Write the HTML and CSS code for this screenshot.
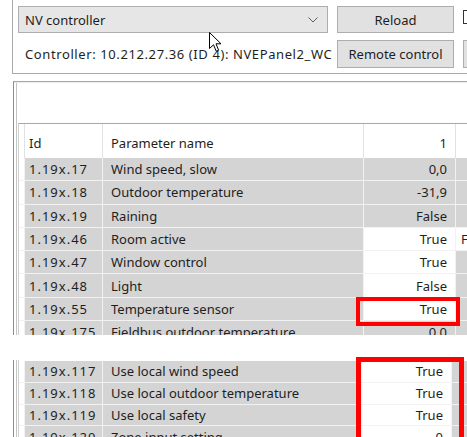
FILE: index.html
```html
<!DOCTYPE html>
<html>
<head>
<meta charset="utf-8">
<title>NV controller</title>
<link rel="stylesheet" href="styles.css">
</head>
<body>
<div class="screen">
  <div class="toolbar">
    <div class="tb-row tb-row-1">
      <div class="combo">
        <span class="combo-text">NV controller</span>
        <svg class="chev" width="10" height="6" viewBox="0 0 10 6"><path d="M0.5 0.5 L5 5 L9.5 0.5" fill="none" stroke="#606060" stroke-width="1"/></svg>
      </div>
      <button class="btn btn-reload">Reload</button>
      <span class="check"></span>
    </div>
    <div class="tb-row tb-row-2">
      <div class="status">Controller: 10.212.27.36 (ID 4): NVEPanel2_WC</div>
      <button class="btn btn-remote">Remote control</button>
      <button class="btn btn-next"></button>
    </div>
  </div>

  <div class="panel panel-top">
    <div class="panel-space"></div>
    <div class="grid grid-top">
      <div class="row head">
        <div class="c gut"></div>
        <div class="c id">Id</div>
        <div class="c name">Parameter name</div>
        <div class="c val">1</div>
        <div class="c ext"></div>
      </div>
      <div class="row">
        <div class="c gut"></div><div class="c id">1.19x.17</div><div class="c name">Wind speed, slow</div><div class="c val">0,0</div><div class="c ext"></div>
      </div>
      <div class="row">
        <div class="c gut"></div><div class="c id">1.19x.18</div><div class="c name">Outdoor temperature</div><div class="c val">-31,9</div><div class="c ext"></div>
      </div>
      <div class="row">
        <div class="c gut"></div><div class="c id">1.19x.19</div><div class="c name">Raining</div><div class="c val">False</div><div class="c ext"></div>
      </div>
      <div class="row">
        <div class="c gut"></div><div class="c id">1.19x.46</div><div class="c name">Room active</div><div class="c val edit">True</div><div class="c ext edit">False</div>
      </div>
      <div class="row">
        <div class="c gut"></div><div class="c id">1.19x.47</div><div class="c name">Window control</div><div class="c val edit">True</div><div class="c ext"></div>
      </div>
      <div class="row">
        <div class="c gut"></div><div class="c id">1.19x.48</div><div class="c name">Light</div><div class="c val edit">False</div><div class="c ext"></div>
      </div>
      <div class="row">
        <div class="c gut"></div><div class="c id">1.19x.55</div><div class="c name">Temperature sensor</div><div class="c val edit">True</div><div class="c ext"></div>
      </div>
      <div class="row">
        <div class="c gut"></div><div class="c id">1.19x.175</div><div class="c name">Fieldbus outdoor temperature</div><div class="c val">0,0</div><div class="c ext"></div>
      </div>
    </div>
  </div>

  <div class="panel panel-bottom">
    <div class="grid grid-bottom">
      <div class="row">
        <div class="c gut"></div><div class="c id">1.19x.117</div><div class="c name">Use local wind speed</div><div class="c val edit">True</div><div class="c ext"></div>
      </div>
      <div class="row">
        <div class="c gut"></div><div class="c id">1.19x.118</div><div class="c name">Use local outdoor temperature</div><div class="c val edit">True</div><div class="c ext"></div>
      </div>
      <div class="row">
        <div class="c gut"></div><div class="c id">1.19x.119</div><div class="c name">Use local safety</div><div class="c val edit">True</div><div class="c ext"></div>
      </div>
      <div class="row">
        <div class="c gut"></div><div class="c id">1.19x.120</div><div class="c name">Zone input setting</div><div class="c val edit">0</div><div class="c ext"></div>
      </div>
    </div>
  </div>

  <svg class="cursor" width="13" height="21" viewBox="0 0 13 21">
    <path d="M0.5 0.5 L0.5 16.5 L4.5 12.8 L7.2 19.2 L9.6 18.2 L7 11.8 L12 11.8 Z" fill="#fff" stroke="#000" stroke-width="1" stroke-linejoin="miter"/>
  </svg>
  <div class="mark mark-1"></div>
  <div class="mark mark-2"></div>
</div>
</body>
</html>
```

FILE: styles.css
```css
html, body {
  margin: 0;
  padding: 0;
  background: #fff;
}

body {
  font-family: "Noto Sans", "Open Sans", sans-serif;
  font-size: 13px;
  color: #1e1e1e;
}

.screen {
  position: relative;
  width: 467px;
  height: 437px;
  overflow: hidden;
}

/* ---- controller toolbar ---- */
.toolbar {
  margin-left: 12px;
  height: 74px;
  box-sizing: border-box;
  border-left: 1px solid #a8a8a8;
  border-bottom: 1px solid #a8a8a8;
  overflow: hidden;
}

.tb-row {
  display: flex;
  align-items: flex-start;
  white-space: nowrap;
}

.tb-row > * {
  flex: none;
}

.tb-row-1 {
  padding-top: 6px;
}

.tb-row-2 {
  margin-top: 7px;
}

.combo {
  margin-left: 5px;
  width: 310px;
  height: 27px;
  box-sizing: border-box;
  border: 1px solid #adadad;
  background: #e6e6e6;
  display: flex;
  align-items: center;
  justify-content: space-between;
  padding: 0 9px 0 6px;
}

.chev {
  display: block;
}

.btn {
  font: inherit;
  color: inherit;
  margin: 0;
  padding: 0;
  box-sizing: border-box;
  border: 1px solid #adadad;
  background: #e1e1e1;
  text-align: center;
}

.btn-reload {
  margin-left: 9px;
  width: 117px;
  height: 27px;
}

.check {
  margin-left: 9px;
  margin-top: 4px;
  width: 14px;
  height: 14px;
  box-sizing: border-box;
  border: 1px solid #333;
  background: #fff;
}

.status {
  margin-left: 12px;
  width: 312px;
  height: 28px;
  line-height: 28px;
  overflow: hidden;
  letter-spacing: 0.6px;
}

.btn-remote {
  width: 117px;
  height: 28px;
}

.btn-next {
  margin-left: 9px;
  width: 40px;
  height: 28px;
}

/* ---- parameter panels ---- */
.panel {
  margin-left: 13px;
  border-left: 1px solid #8e8e8e;
  box-shadow: inset 2px 0 0 #fff, inset 3px 0 0 #c4c4c4;
  overflow: hidden;
}

.panel-top {
  margin-top: 7px;
  height: 254px;
  box-sizing: border-box;
  border-top: 1px solid #a8a8a8;
}

.panel-space {
  height: 41px;
  border-top: 1px solid #ececec;
  box-sizing: border-box;
}

.panel-bottom {
  margin-top: 25px;
  height: 77px;
}

.grid {
  margin-left: 4px;
  border-left: 1px solid #cfcfcf;
}

.grid-top {
  border-top: 1px solid #a8a8a8;
}

.grid-bottom {
  padding-top: 1px;
}

.row {
  display: grid;
  grid-template-columns: 5px 77px 260px 91px 1fr;
  column-gap: 1px;
  height: 23.3px;
  box-sizing: border-box;
  border-bottom: 1px solid #f2f2f2;
  background: #f2f2f2;
}

.grid-bottom .row {
  height: 21.8px;
  grid-template-columns: 5px 77px 258px 89px 1fr;
}

.row.head {
  height: 34px;
  border-bottom: 0;
  background: #e2e2e2;
}

.row.head .c {
  padding-top: 3px;
}

.c {
  display: flex;
  align-items: center;
  background: #d4d4d4;
  white-space: nowrap;
  overflow: hidden;
}

.head .c,
.c.gut,
.c.edit {
  background: #fff;
}

.id {
  padding-left: 4px;
  letter-spacing: 1px;
}

.head .id {
  letter-spacing: 0;
}

.name {
  padding-left: 8px;
}

.val {
  justify-content: flex-end;
  padding-right: 8px;
}

.ext {
  padding-left: 5px;
}

/* ---- overlays ---- */
.cursor {
  position: absolute;
  left: 209px;
  top: 32px;
}

.mark {
  position: absolute;
  box-sizing: border-box;
  border: 4px solid #ff0000;
}

.mark-1 {
  left: 356px;
  top: 297px;
  width: 104px;
  height: 29px;
}

.mark-2 {
  left: 356px;
  top: 357px;
  width: 108px;
  height: 100px;
  border-width: 5px;
}
```
